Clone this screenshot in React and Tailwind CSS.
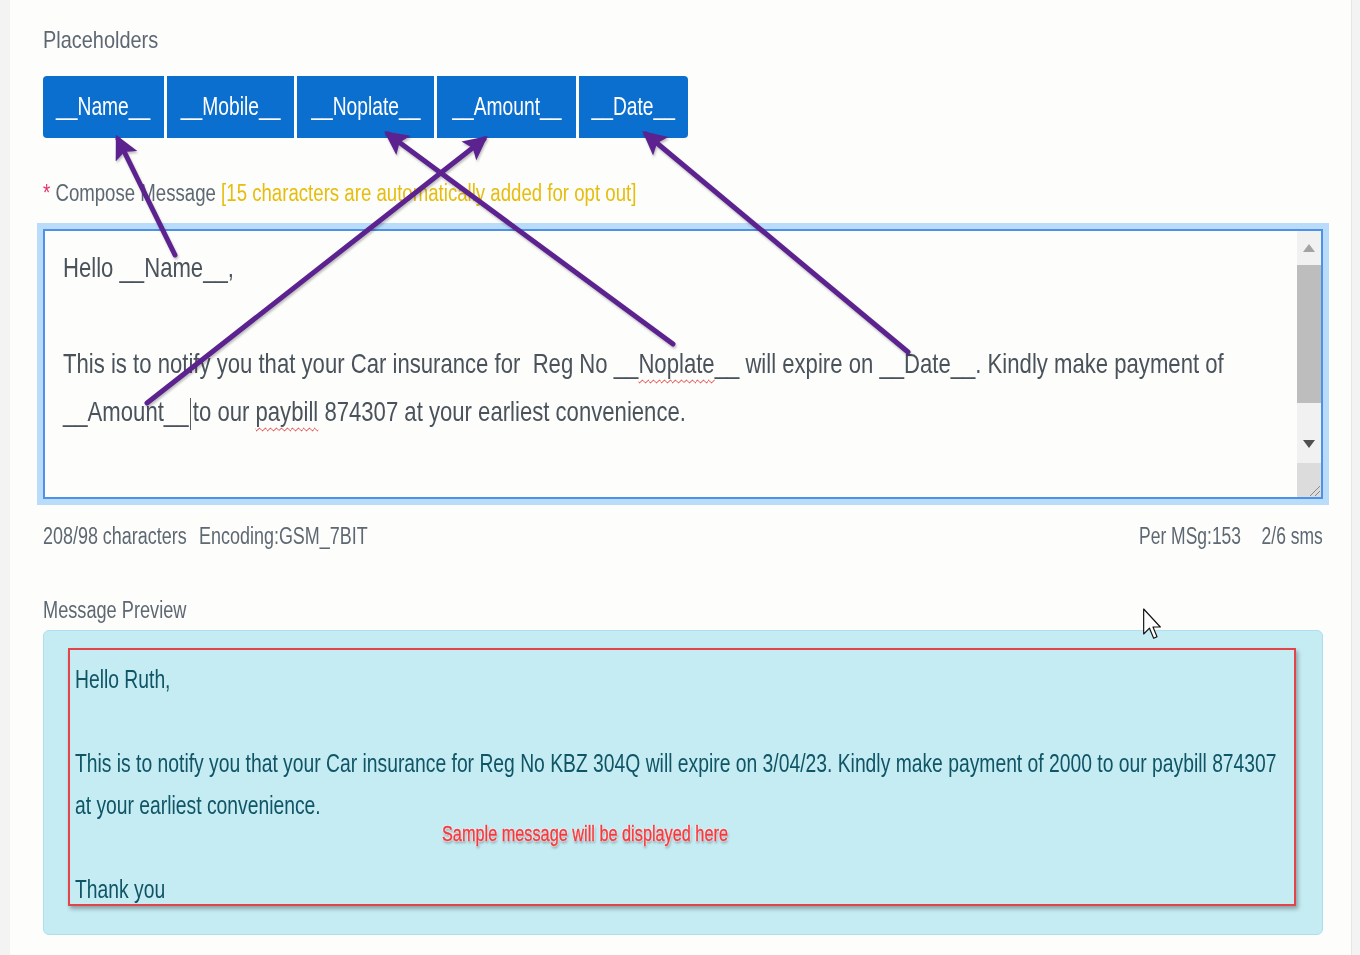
import React from 'react'

const FONT = { fontFamily: '"Liberation Sans", Arial, sans-serif' }

const buttons = [
  { label: '__Name__', w: 'w-[121px]', cls: 'rounded-l-[4px]' },
  { label: '__Mobile__', w: 'w-[127px]', cls: '' },
  { label: '__Noplate__', w: 'w-[137px]', cls: '' },
  { label: '__Amount__', w: 'w-[139px]', cls: '' },
  { label: '__Date__', w: 'w-[109px]', cls: 'rounded-r-[4px]' },
]

// condensed look of the original UI font
const NARROW = 'inline-block origin-left scale-x-[0.79] whitespace-nowrap'

function Arrows() {
  // annotation arrows drawn over the form
  const lines = [
    [175, 255, 118, 139],
    [147, 403, 484, 139],
    [673, 344, 388, 134],
    [908, 352, 646, 134],
  ]
  return (
    <svg
      className="absolute left-0 top-0 pointer-events-none"
      width="1360"
      height="955"
      style={{ filter: 'drop-shadow(1px 2px 1px rgba(0,0,0,0.25))' }}
    >
      <defs>
        <marker id="head" viewBox="0 0 10 10" refX="8" refY="5" markerWidth="5" markerHeight="4.8" orient="auto">
          <path d="M0 0 L10 5 L0 10 L2 5 z" fill="#5b2290" />
        </marker>
      </defs>
      {lines.map(([x1, y1, x2, y2], i) => (
        <line
          key={i}
          x1={x1}
          y1={y1}
          x2={x2}
          y2={y2}
          stroke="#5b2290"
          strokeWidth="5"
          strokeLinecap="round"
          markerEnd="url(#head)"
        />
      ))}
    </svg>
  )
}

function Cursor() {
  return (
    <svg className="absolute left-[1142px] top-[605px] pointer-events-none" width="20" height="38" viewBox="0 0 12 20">
      <path d="M1 1 L1 16 L4.5 12.5 L7 18.5 L9 17.6 L6.6 11.8 L11 11.8 Z" fill="#fff" stroke="#111" strokeWidth="0.7" strokeLinejoin="round" />
    </svg>
  )
}

export default function App() {
  return (
    <div className="relative w-[1360px] h-[955px] bg-[#f3f3f3] overflow-hidden" style={FONT}>
      <div className="ml-[10px] w-[1342px] h-full bg-[#fdfdfb] pl-[33px] pr-[28px] flex flex-col border-r border-[#e6e6e6]">

        {/* Placeholders */}
        <div className="mt-[24px] h-[32px] leading-[32px] text-[24px] text-[#5d6872]">
          <span className="inline-block origin-left scale-x-[0.83] whitespace-nowrap">Placeholders</span>
        </div>

        <div className="mt-[20px] flex gap-[3px]">
          {buttons.map((b) => (
            <div
              key={b.label}
              className={`${b.w} ${b.cls} h-[62px] bg-[#0b6fcf] text-white text-[25px] flex items-center justify-center overflow-visible`}
            >
              <span className="inline-block origin-center scale-x-[0.77] whitespace-nowrap">{b.label}</span>
            </div>
          ))}
        </div>

        {/* Compose label */}
        <div className="mt-[39px] h-[32px] leading-[32px] text-[23px] text-[#5d6872]">
          <span className="inline-block origin-left scale-x-[0.81] whitespace-nowrap">
            <span className="text-[#e8336b]">*</span> Compose Message{' '}
            <span className="text-[#e6bd0c]">[15 characters are automatically added for opt out]</span>
          </span>
        </div>

        {/* Textarea */}
        <div className="mt-[14px] ml-[-6px] mr-[-6px] p-[6px] bg-[#b9dcfb]">
          <div className="h-[270px] border-2 border-[#4d92e8] bg-[#fdfdfb] flex">
            <div className="flex-1 min-w-0 pl-[18px] pt-[13px] text-[28px] leading-[48px] text-[#4a535b] whitespace-nowrap">
              <div className="origin-left scale-x-[0.79]">Hello __Name__,</div>
              <div>&nbsp;</div>
              <div className="origin-left scale-x-[0.79]">
                This is to notify you that your Car insurance for&nbsp; Reg No __
                <span className="underline decoration-wavy decoration-[#e02020] decoration-1 underline-offset-[6px]">Noplate</span>
                __ will expire on __Date__. Kindly make payment of
              </div>
              <div className="origin-left scale-x-[0.79]">
                __Amount__<span className="inline-block w-[1.5px] h-[32px] bg-[#333] align-middle mx-[2px]"></span>to our{' '}
                <span className="underline decoration-wavy decoration-[#e02020] decoration-1 underline-offset-[6px]">paybill</span>{' '}
                874307 at your earliest convenience.
              </div>
            </div>

            {/* scrollbar */}
            <div className="w-[24px] shrink-0 bg-[#f1f1f1] flex flex-col items-center">
              <div className="h-[34px] flex items-center justify-center text-[#a3a3a3]">
                <svg width="12" height="8" viewBox="0 0 12 8"><path d="M6 0 L12 8 L0 8 z" fill="currentColor" /></svg>
              </div>
              <div className="w-[24px] h-[138px] bg-[#bdbdbd]"></div>
              <div className="flex-1"></div>
              <div className="h-[34px] pb-[4px] flex items-center justify-center text-[#505050]">
                <svg width="12" height="8" viewBox="0 0 12 8"><path d="M0 0 L12 0 L6 8 z" fill="currentColor" /></svg>
              </div>
              <div className="w-[24px] h-[34px] bg-[#dcdcdc] flex items-end justify-end">
                <svg width="14" height="14" viewBox="0 0 14 14">
                  <path d="M13 3 L3 13 M13 8 L8 13" stroke="#888" strokeWidth="1" />
                </svg>
              </div>
            </div>
          </div>
        </div>

        {/* Status row */}
        <div className="mt-[16px] h-[30px] leading-[30px] text-[23px] text-[#5d6872] flex justify-between">
          <span className="inline-block origin-left scale-x-[0.78] whitespace-nowrap">
            208/98 characters<span className="inline-block w-[16px]"></span>Encoding:GSM_7BIT
          </span>
          <span className="inline-block origin-right scale-x-[0.76] whitespace-nowrap">
            Per MSg:153<span className="inline-block w-[27px]"></span>2/6 sms
          </span>
        </div>

        {/* Message preview */}
        <div className="mt-[44px] h-[30px] leading-[30px] text-[23px] text-[#5d6872]">
          <span className={NARROW}>Message Preview</span>
        </div>

        <div className="mt-[5px] h-[305px] rounded-[6px] border border-[#ade0ee] bg-[#c5ebf3] pt-[17px] pl-[24px] pr-[26px]">
          <div className="h-[258px] border-2 border-[#e2444a] shadow-[2px_3px_4px_rgba(0,0,0,0.3)] pl-[5px] pt-[8px] text-[25px] leading-[42px] text-[#0f5565] overflow-hidden whitespace-nowrap">
            <div className="origin-left scale-x-[0.772]">Hello Ruth,</div>
            <div>&nbsp;</div>
            <div className="origin-left scale-x-[0.772]">This is to notify you that your Car insurance for Reg No KBZ 304Q will expire on 3/04/23. Kindly make payment of 2000 to our paybill 874307</div>
            <div className="origin-left scale-x-[0.772]">at your earliest convenience.</div>
            <div>&nbsp;</div>
            <div className="origin-left scale-x-[0.772]">Thank you</div>
          </div>
        </div>
      </div>

      {/* annotation text */}
      <div
        className="absolute left-[442px] top-[820px] text-[22px] leading-[28px] text-[#f23a3f] whitespace-nowrap origin-left scale-x-[0.74] [-webkit-text-stroke:0.4px_#f23a3f]"
        style={{ textShadow: '0 0 2px #fff, 0 0 2px #fff, 0 0 2px #fff, 1px 2px 3px rgba(0,0,0,0.45)' }}
      >
        Sample message will be displayed here
      </div>

      <Arrows />
      <Cursor />
    </div>
  )
}
